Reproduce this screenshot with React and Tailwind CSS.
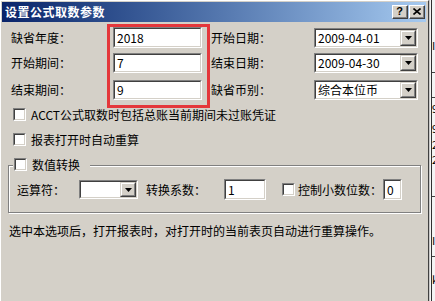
import React from 'react';

// classic win2000 sunken edit box
function Edit({ w, h = 20, value, className = '' }) {
  return (
    <div
      className={`flex border-t border-l border-[#808080] border-b border-r border-b-white border-r-white ${className}`}
      style={{ width: w, height: h }}
    >
      <div className="flex-1 flex items-center border-t border-l border-[#404040] border-b border-r border-b-[#d4d0c8] border-r-[#d4d0c8] bg-white pl-[2px] text-[12px] leading-none text-black">
        {value}
      </div>
    </div>
  );
}

function DropBtn() {
  return (
    <div className="w-[16px] h-full flex border-t border-l border-[#d4d0c8] border-b border-r border-b-[#404040] border-r-[#404040]">
      <div className="flex-1 flex items-center justify-center bg-[#d4d0c8] border-t border-l border-white border-b border-r border-b-[#808080] border-r-[#808080]">
        <svg width="7" height="4" viewBox="0 0 7 4">
          <path d="M0 0h7L3.5 4z" fill="#000" />
        </svg>
      </div>
    </div>
  );
}

function Combo({ w, h = 20, value }) {
  return (
    <div
      className="flex border-t border-l border-[#808080] border-b border-r border-b-white border-r-white"
      style={{ width: w, height: h }}
    >
      <div className="flex-1 flex border-t border-l border-[#404040] border-b border-r border-b-[#d4d0c8] border-r-[#d4d0c8] bg-white">
        <div className="flex-1 flex items-center pl-[2px] text-[12px] leading-none text-black">{value}</div>
        <DropBtn />
      </div>
    </div>
  );
}

function Check() {
  return (
    <div className="w-[13px] h-[13px] flex border-t border-l border-[#808080] border-b border-r border-b-white border-r-white">
      <div className="flex-1 border-t border-l border-[#404040] border-b border-r border-b-[#d4d0c8] border-r-[#d4d0c8] bg-white" />
    </div>
  );
}

function CaptionBtn({ children }) {
  return (
    <div className="w-[16px] h-[14px] flex border-t border-l border-white border-b border-r border-b-[#404040] border-r-[#404040] bg-[#d4d0c8]">
      <div className="flex-1 flex items-center justify-center border-b border-r border-[#808080] border-t-0 border-l-0">
        {children}
      </div>
    </div>
  );
}

export default function App() {
  return (
    <div className="flex w-[435px] h-[301px] overflow-hidden bg-white font-['Noto_Sans_CJK_SC',sans-serif] text-black">
      {/* dialog */}
      <div className="relative w-[429px] h-full bg-[#d4d0c8] border-l border-t border-white border-r border-r-[#404040] pl-[1px] pt-[1px] flex flex-col">
        {/* title bar */}
        <div className="h-[20px] mr-[2px] flex items-center justify-between bg-gradient-to-r from-[#0a246a] to-[#a6caf0] pl-[3px] pr-[1px]">
          <span className="text-white font-bold text-[12px] leading-none tracking-[0.5px]">设置公式取数参数</span>
          <div className="flex gap-[1px]">
            <CaptionBtn>
              <span className="text-[11px] font-bold leading-none font-['Liberation_Sans',sans-serif]">?</span>
            </CaptionBtn>
            <CaptionBtn>
              <svg width="8" height="7" viewBox="0 0 8 7">
                <path d="M0.5 0.5l7 6M7.5 0.5l-7 6" stroke="#000" strokeWidth="1.6" />
              </svg>
            </CaptionBtn>
          </div>
        </div>

        {/* top fields */}
        <div className="flex items-center h-[21px] mt-[5px]">
          <span className="w-[111px] pl-[9px] text-[12px] leading-none">缺省年度：</span>
          <Edit w={89} h={21} value="2018" />
          <span className="w-[112px] pl-[9px] text-[12px] leading-none">开始日期：</span>
          <Combo w={104} value="2009-04-01" />
        </div>
        <div className="flex items-center h-[20px] mt-[5px]">
          <span className="w-[111px] pl-[9px] text-[12px] leading-none">开始期间：</span>
          <Edit w={89} h={20} value="7" />
          <span className="w-[112px] pl-[9px] text-[12px] leading-none">结束日期：</span>
          <Combo w={104} value="2009-04-30" />
        </div>
        <div className="flex items-center h-[20px] mt-[7px]">
          <span className="w-[111px] pl-[9px] text-[12px] leading-none">结束期间：</span>
          <Edit w={89} h={20} value="9" />
          <span className="w-[112px] pl-[9px] text-[12px] leading-none">缺省币别：</span>
          <Combo w={104} value="综合本位币" />
        </div>

        {/* checkboxes */}
        <div className="flex items-center h-[13px] mt-[8px] pl-[11px] gap-[5px]">
          <Check />
          <span className="text-[12px] leading-none">ACCT公式取数时包括总账当前期间未过账凭证</span>
        </div>
        <div className="flex items-center h-[13px] mt-[12px] pl-[11px] gap-[5px]">
          <Check />
          <span className="text-[12px] leading-none">报表打开时自动重算</span>
        </div>

        {/* group box */}
        <div className="relative ml-[6px] mt-[19px] w-[413px] h-[48px] border border-[#808080] shadow-[inset_1px_1px_0_#fff,1px_1px_0_#fff]">
          <div className="absolute -top-[8px] left-[4px] flex items-center h-[13px] gap-[5px] bg-[#d4d0c8] pl-[1px] pr-[10px]">
            <Check />
            <span className="text-[12px] leading-none">数值转换</span>
          </div>
          <div className="flex items-center h-[21px] mt-[13px] pl-[8px]">
            <span className="w-[62px] text-[12px] leading-none">运算符：</span>
            <Combo w={59} h={19} value="" />
            <span className="w-[86px] pl-[8px] text-[12px] leading-none">转换系数：</span>
            <Edit w={42} h={21} value="1" />
            <div className="ml-[16px]">
              <Check />
            </div>
            <span className="w-[88px] pl-[3px] text-[12px] leading-none">控制小数位数：</span>
            <Edit w={19} h={21} value="0" />
          </div>
        </div>

        <div className="mt-[12px] pl-[7px] text-[12px] leading-none">
          选中本选项后，打开报表时，对打开时的当前表页自动进行重算操作。
        </div>

        {/* red annotation box */}
        <div className="absolute left-[106px] top-[23px] w-[103px] h-[84px] border-[3px] border-[#e4373b]" />
      </div>

      {/* sliver of the sheet behind the dialog */}
      <div className="relative flex-1 h-full overflow-hidden bg-[#f4f4f4] border-l border-[#c8c8c8]">
        <div className="absolute left-[1px] top-0 bottom-0 w-px bg-[#303030]" />
        <span className="absolute left-[2px] top-[40px] text-[11px] leading-none">I</span>
        <div className="absolute left-[2px] right-0 top-[72px] h-px bg-[#404040]" />
        <div className="absolute left-[2px] right-0 top-[97px] h-px bg-[#404040]" />
        <span className="absolute left-[2px] top-[103px] text-[11px] leading-none">9</span>
        <span className="absolute left-[2px] top-[123px] text-[11px] leading-none">9</span>
        <span className="absolute left-[2px] top-[139px] text-[11px] leading-none">2</span>
        <span className="absolute left-[2px] top-[154px] text-[11px] leading-none">2</span>
        <div className="absolute left-[2px] right-0 top-[196px] h-px bg-[#404040]" />
        <span className="absolute left-[2px] top-[235px] text-[11px] leading-none">I</span>
        <div className="absolute left-[2px] right-0 top-[256px] h-px bg-[#404040]" />
        <span className="absolute left-[2px] top-[274px] text-[11px] leading-none">k</span>
      </div>
    </div>
  );
}
